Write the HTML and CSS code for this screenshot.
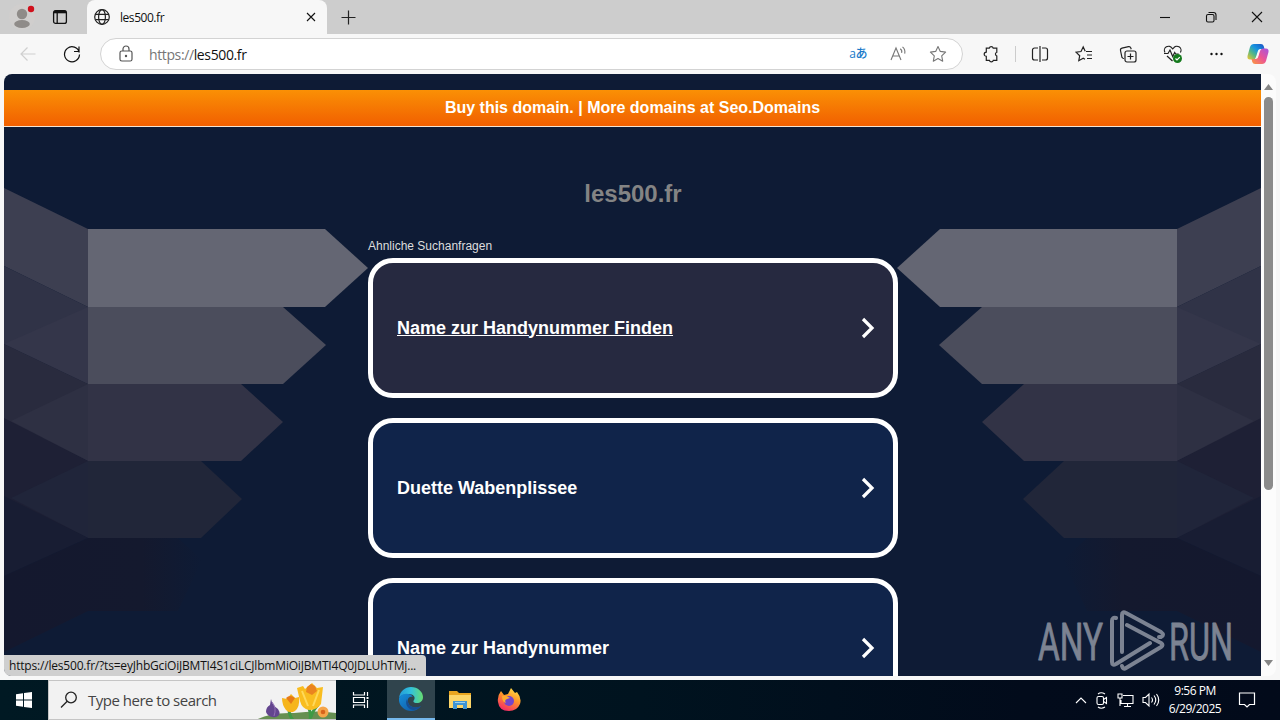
FILE: index.html
```html
<!DOCTYPE html>
<html lang="de">
<head>
    <meta charset="UTF-8">
    <title>les500.fr</title>
    <link rel="stylesheet" href="styles.css">
</head>
<body>
    <!-- Tab strip -->
    <div class="tabs">
        <svg class="profile" width="28" height="30" viewBox="8 2 28 30">
            <circle cx="22" cy="17" r="13" fill="#d0cecd"/>
            <circle cx="22" cy="14" r="5.2" fill="#8f8b88"/>
            <ellipse cx="22" cy="24" rx="7.8" ry="4" fill="#8f8b88"/>
            <circle cx="31" cy="9" r="3.2" fill="#d0101c"/>
        </svg>
        <svg class="workspaces" width="16" height="16" viewBox="0 0 16 16" fill="none" stroke="#111" stroke-width="1.3">
            <rect x="1.6" y="1.6" width="12.8" height="12.8" rx="2"/>
            <path d="M2 3h12" stroke-width="2.6"/>
            <path d="M5.2 4v10"/>
        </svg>
        <div class="tab">
            <svg width="16" height="16" viewBox="0 0 16 16" fill="none" stroke="#222" stroke-width="1.2">
                <circle cx="8" cy="8" r="7.3"/>
                <ellipse cx="8" cy="8" rx="3.4" ry="7.3"/>
                <path d="M1.4 5.3h13.2M1.4 10.7h13.2"/>
            </svg>
            <span class="tab-title">les500.fr</span>
            <svg class="close" width="10" height="10" viewBox="0 0 10 10" stroke="#111" stroke-width="1.1"><path d="M1 1l8 8M9 1l-8 8"/></svg>
        </div>
        <svg class="plus" width="15" height="15" viewBox="0 0 15 15" stroke="#222" stroke-width="1.2"><path d="M7.5 .5v14M.5 7.5h14"/></svg>
        <div class="window-buttons">
            <svg width="12" height="12" viewBox="0 0 12 12" fill="none" stroke="#111" stroke-width="1.1"><path d="M1 6.5h10"/></svg>
            <svg width="12" height="12" viewBox="0 0 12 12" fill="none" stroke="#111" stroke-width="1.1"><rect x="1.5" y="3.5" width="7.5" height="7.5" rx="1.5"/><path d="M3.5 1.5h5a2.5 2.5 0 0 1 2.5 2.5v5"/></svg>
            <svg width="12" height="12" viewBox="0 0 12 12" fill="none" stroke="#111" stroke-width="1.1"><path d="M1 1l10 10M11 1L1 11"/></svg>
        </div>
    </div>

    <!-- Toolbar -->
    <div class="toolbar">
        <svg class="back" width="16" height="16" viewBox="0 0 16 16" fill="none" stroke="#cfcfcf" stroke-width="1.2"><path d="M15.5 8H1M7.5 1.5L1 8l6.5 6.5"/></svg>
        <svg class="reload" width="18" height="18" viewBox="0 0 18 18" fill="none" stroke="#111" stroke-width="1.2"><path d="M16.3 7.5A7.5 7.5 0 1 0 16.5 9.5M16 1.500v5H11"/></svg>
        <div class="address">
            <svg class="lock" width="14" height="18" viewBox="0 0 14 18" fill="none" stroke="#555" stroke-width="1.2"><rect x="1" y="6" width="12" height="10" rx="1.8"/><path d="M4 6V4a3 3 0 0 1 6 0v2"/><circle cx="7" cy="11" r=".6" fill="#555"/></svg>
            <span class="url"><span class="scheme">https://</span>les500.fr</span>
            <span class="translate">aあ</span>
            <svg class="read" width="18" height="16" viewBox="0 0 18 16" fill="none" stroke="#777" stroke-width="1.1"><path d="M1 14L6 2l5 12M2.800 10h6.600M10.200 2.800a3.5 3.5 0 0 1 1.400 4M12.500 .800a7 7 0 0 1 2.200 6.800"/></svg>
            <svg class="star" width="18" height="18" viewBox="0 0 18 18" fill="none" stroke="#777" stroke-width="1.1" stroke-linejoin="round"><path d="M9 1.5l2.3 4.9 5.3.7-3.9 3.7 1 5.4L9 13.600l-4.700 2.600 1-5.400L1.400 7.100l5.300-.7z"/></svg>
        </div>
        <div class="tools">
            <svg width="18" height="18" viewBox="0 0 18 18"><path d="M4.300 3.200h3a2 2 0 0 1 3.900 0h3.600v4a2 2 0 0 0 0 3.800v4.300h-3.500a2 2 0 0 1-3.900 0H4.300v-4a2.100 2.100 0 1 1 0-4.200z"/></svg>
            <span class="separator"></span>
            <svg width="18" height="18" viewBox="0 0 18 18"><path d="M7 3H3.500a2 2 0 0 0-2 2v8a2 2 0 0 0 2 2H7M11 3h3.500a2 2 0 0 1 2 2v8a2 2 0 0 1-2 2H11M9 1v16"/></svg>
            <svg width="18" height="18" viewBox="0 0 18 18"><path d="M11 6.500h6M12 10h5M12 13.500h5M10.200 6.300L8.200 2 6 6.500l-5 .7 3.700 3.500-.9 5 4.400-2.400 1.800 1"/></svg>
            <svg width="18" height="18" viewBox="0 0 18 18"><path d="M5 13.500l-1-.3a2 2 0 0 1-1.300-2L1.500 5.500a2 2 0 0 1 1.500-2.300L9.500 1.700a2 2 0 0 1 2.300 1.200l.4 1.300"/><rect x="6" y="6" width="11" height="11" rx="2"/><path d="M11.500 8.500v6M8.500 11.500h6"/></svg>
            <svg width="20" height="18" viewBox="0 0 20 18"><path d="M2 7.500a4 4 0 0 1 7-4.300l.7.700.7-.7a4 4 0 0 1 7 4.300M4 11l5.500 5M1 8.500h4l2-3.500 2.700 6.500 2-4 1 1.500h3"/><circle cx="14.500" cy="13.500" r="4.500" fill="#157a1d" stroke="none"/><path d="M12.500 13.500l1.500 1.500 2.800-2.800" stroke="#fff"/></svg>
            <svg width="16" height="18" viewBox="0 0 16 18"><g fill="#111" stroke="none"><circle cx="2.500" cy="9" r="1.200"/><circle cx="7.500" cy="9" r="1.200"/><circle cx="12.500" cy="9" r="1.200"/></g></svg>
        </div>
        <svg class="copilot" width="22" height="22" viewBox="0 0 22 22">
            <defs>
                <linearGradient id="cool" x1="0" y1="1" x2="1" y2="0"><stop offset="0" stop-color="#f5c72b"/><stop offset=".35" stop-color="#52b788"/><stop offset=".6" stop-color="#1695e0"/><stop offset="1" stop-color="#1c4fc4"/></linearGradient>
                <linearGradient id="warm" x1="1" y1="0" x2="0" y2="1"><stop offset="0" stop-color="#a455e0"/><stop offset=".5" stop-color="#ec5594"/><stop offset="1" stop-color="#fb9b3c"/></linearGradient>
            </defs>
            <path d="M7 1h7q2 0 2.700 2l.8 3h-4q-2 0-2.600 2L9 14q-.7 2.500-3 2.500H3q-3 0-2.500-3.500L3 4q1-3 4-3z" fill="url(#cool)"/>
            <path d="M15 21H8q-2 0-2.700-2l-.8-3h4q2 0 2.600-2L13 8q.7-2.500 3-2.500h3q3 0 2.500 3.500L19 18q-1 3-4 3z" fill="url(#warm)"/>
            <path d="M9.500 14.500l2-7q.3-1 1.300-1-1.500 6-2 7.500-.3 1-1.300.5z" fill="#f7f7f7"/>
        </svg>
    </div>

    <div class="view">
        <div class="page">
            <svg class="arrows" width="1257" height="602" viewBox="4 74 1257 602">
                <defs>
                    <linearGradient id="fade"><stop offset="0" stop-color="#14182e"/><stop offset=".7" stop-color="#14192e"/><stop offset="1" stop-color="#0e1b35"/></linearGradient>
                    <g id="wing">
                        <path d="M4 188L88 229V307L4 266z" fill="#3d3f51"/>
                        <path d="M4 266L88 307V384L4 344z" fill="#303347"/>
                        <path d="M4 344L88 307V384z" fill="#34364a"/>
                        <path d="M4 344L88 384V461L4 421z" fill="#292b3e"/>
                        <path d="M11 421L88 384V461z" fill="#2e3043"/>
                        <path d="M4 418L88 461V538L4 498z" fill="#1e2035"/>
                        <path d="M11 498L88 461V538z" fill="#20253a"/>
                        <path d="M4 496L88 538 4 576z" fill="#181d33"/>
                        <path d="M4 576L88 538H178L202 560 178 611H88L4 652z" fill="url(#fade)"/>
                        <path d="M88 229H325L368 268 325 307H88z" fill="#646673"/>
                        <path d="M88 307H283L326 345 283 384H88z" fill="#4b4d5c"/>
                        <path d="M88 384H241L283 422 241 461H88z" fill="#323346"/>
                        <path d="M88 461H201L242 499 201 538H88z" fill="#212639"/>
                    </g>
                </defs>
                <use href="#wing"/>
                <use href="#wing" transform="translate(1265 0) scale(-1 1)"/>
            </svg>
            <div class="banner">Buy this domain. | More domains at Seo.Domains</div>
            <div class="content">
                <h1>les500.fr</h1>
                <p>Ahnliche Suchanfragen</p>
                <a class="card hovered"><span>Name zur Handynummer Finden</span><svg width="14" height="22" viewBox="0 0 14 22"><path d="M2 2l9 9-9 9"/></svg></a>
                <a class="card"><span>Duette Wabenplissee</span><svg width="14" height="22" viewBox="0 0 14 22"><path d="M2 2l9 9-9 9"/></svg></a>
                <a class="card"><span>Name zur Handynummer</span><svg width="14" height="22" viewBox="0 0 14 22"><path d="M2 2l9 9-9 9"/></svg></a>
            </div>
        </div>
        <div class="scrollbar">
            <svg width="9" height="6" viewBox="0 0 9 6"><path d="M0 6L4.500 0 9 6z"/></svg>
            <div class="thumb"></div>
            <svg class="down" width="9" height="6" viewBox="0 0 9 6"><path d="M0 0h9L4.500 6z"/></svg>
        </div>
        <div class="status">https://les500.fr/?ts=eyJhbGciOiJBMTI4S1ciLCJlbmMiOiJBMTI4Q0JDLUhTMj...</div>
        <svg class="watermark" width="204" height="66" viewBox="1033 608 204 66">
            <text x="1038" y="660" textLength="65" lengthAdjust="spacingAndGlyphs">ANY</text>
            <text x="1169" y="660" textLength="64" lengthAdjust="spacingAndGlyphs">RUN</text>
            <path d="M1116 618q-4-1-4 3v41q0 4 4 2l34-21M1122 652v-37q0-4 4-2l35 19q4 3 0 5h-2M1127 625l34 18q3 2 0 4l-35 21q-3 2-4-2"/>
        </svg>
    </div>

    <!-- Windows taskbar -->
    <div class="taskbar">
        <div class="start"><svg width="16" height="16" viewBox="0 0 16 16" fill="#fff"><path d="M0 2.200l7-1v6.300H0zM8 1l8-1v7.500H8zM0 8.500h7v6.300l-7-1zM8 8.500h8V16l-8-1z"/></svg></div>
        <div class="search">
            <svg width="18" height="18" viewBox="0 0 18 18" fill="none" stroke="#222" stroke-width="1.300"><circle cx="11" cy="6.500" r="5.300"/><path d="M7.200 10.300L1 16.500"/></svg>
            <span>Type here to search</span>
            <svg class="flowers" width="80" height="38" viewBox="256 681 80 38">
                <path d="M256 720q14-8 38-7 24-3 42 0v7z" fill="#668f51"/>
                <path d="M289 711q1 6 4 9M309 708q2 6 1 12M318 705q-5 5-7 12" stroke="#3f9a45" stroke-width="3" fill="none"/>
                <path d="M271 699q1 6 7 10 4 6-2 8-8 1-10-5 0-5 4-7z" fill="#63458f"/>
                <path d="M272 702q5 6 2 14" stroke="#9271b4" fill="none"/>
                <path d="M282 698l5 1 4-5 4 4 4-1q1 10-4 14-5 3-9-1-4-5-4-12z" fill="#f6b51c"/>
                <path d="M286 698q4-4 9 0l-4 6z" fill="#e67a18"/>
                <path d="M297 688l6-2 2 3 7-6 5 5 6-1-2 17q-4 6-12 6-7-1-9-9z" fill="#f9bd20"/>
                <path d="M307 687l4-3 4 2 2 5-5 4-6-3z" fill="#ea8420"/>
                <path d="M302 691l6 15M319 690l-6 16" stroke="#ffd95a" stroke-width="2"/>
                <circle cx="323" cy="712" r="5.500" fill="#f5a54a"/><circle cx="323" cy="712" r="2.300" fill="#d8641c"/>
            </svg>
        </div>
        <div class="app task-view"><svg width="18" height="18" viewBox="0 0 18 18" fill="none" stroke="#fff" stroke-width="1.200"><path d="M1.500 1v3h11V1M1.500 17v-3h11v3M1.500 6.500h11v5h-11zM15.500 1v4M15.500 9v8"/><path d="M14.500 7h2" stroke-width="2"/></svg></div>
        <div class="app active">
            <svg width="24" height="24" viewBox="0 0 24 24">
                <defs>
                    <linearGradient id="edge1"><stop offset="0" stop-color="#249bd8"/><stop offset=".5" stop-color="#32c1dc"/><stop offset="1" stop-color="#66dc70"/></linearGradient>
                    <linearGradient id="edge2" x1="0" y1="0" x2="1" y2="1"><stop offset="0" stop-color="#168fda"/><stop offset="1" stop-color="#10539e"/></linearGradient>
                </defs>
                <path d="M0 11C1 4 6 0 12 0c7 0 12 5 12 10 0 4-3 6-6 6-4 0-4-2-3-3 2-3-1-6-5-6-5 0-9 2-10 4z" fill="url(#edge1)"/>
                <path d="M0 11c2-5 11-6 14-1-4-1-6 2-5 5 1 5 7 7 13 4-2 3-6 5-10 5C5 24-1 18 0 11z" fill="url(#edge2)"/>
                <path d="M8 12c-3 6 2 11 7 11 3-1 6-2 7-4-6 3-12 1-13-4z" fill="#174d91"/>
            </svg>
        </div>
        <div class="app">
            <svg width="22" height="20" viewBox="0 0 22 20"><path d="M0 1h8l2 2h12v15H0z" fill="#e9a51f"/><path d="M0 5h22v13H0z" fill="#fcd568"/><path d="M4 19v-8h14v8h-4v-4H8v4z" fill="#3e94d3"/><path d="M6 12h10v1H6z" fill="#9bd0ee"/></svg>
        </div>
        <div class="app">
            <svg width="24" height="24" viewBox="0 0 24 24">
                <defs><linearGradient id="fox" x1=".8" y1="0" x2=".3" y2="1"><stop offset="0" stop-color="#ffe34a"/><stop offset=".45" stop-color="#ff9528"/><stop offset="1" stop-color="#f42968"/></linearGradient></defs>
                <path d="M4 3l3 4 4-1 3-6 4 5 2-1q5 6 3 12-3 7-11 7Q2 23 1 14q-1-6 3-11z" fill="url(#fox)"/>
                <circle cx="12" cy="13" r="5" fill="#7445cb"/>
                <path d="M5 8q4-1 8 2l-3 1q-3 1-1 4-4-1-4-7z" fill="#ffac2e"/>
            </svg>
        </div>
        <div class="tray">
            <svg width="12" height="18" viewBox="0 0 12 18"><path d="M1 12l5-5 5 5"/></svg>
            <svg width="14" height="18" viewBox="0 0 14 18"><rect x="2" y="5.500" width="6.500" height="8" rx="1.500"/><path d="M8.500 8.500l3-2v6l-3-2M3 3q3-2.500 7 0M3 16q3 2.500 7 0"/></svg>
            <svg width="17" height="18" viewBox="0 0 17 18"><path d="M6 4.500h10v8H4V9M10.500 12.500v3M7 15.500h7M1 3h4v4H1zM3 7v8"/></svg>
            <svg width="18" height="18" viewBox="0 0 18 18"><path d="M1 6.500h2.500L7 3v12l-3.500-3.500H1zM9.500 6.500q2 2.500 0 5M12 4.500q3.500 4.500 0 9M14.500 3q4.500 6 0 12"/></svg>
        </div>
        <div class="clock"><div class="time">9:56 PM</div><div class="date">6/29/2025</div></div>
        <svg class="notice" width="18" height="18" viewBox="0 0 18 18" fill="none" stroke="#fff" stroke-width="1.200"><path d="M1.500 2h15v11.500h-5L9 16l-2.500-2.500h-5z"/></svg>
    </div>
</body>
</html>
```
FILE: styles.css
```css
* {
    box-sizing: border-box;
}
body {
    margin: 0;
    width: 1280px;
    height: 720px;
    overflow: hidden;
    background: #f7f7f7;
    font-family: "Open Sans", "Noto Sans", sans-serif;
    color: #111;
}
svg {
    display: block;
    flex: none;
}

/* browser */
.tabs {
    display: flex;
    align-items: center;
    height: 34px;
    background: #cdcdcd;
}
.profile {
    margin-left: 8px;
}
.workspaces {
    margin-left: 16px;
}
.tab {
    display: flex;
    align-items: center;
    width: 240px;
    height: 34px;
    margin-left: 19px;
    padding: 0 11px 0 7px;
    background: #f7f7f7;
    border-radius: 8px 8px 0 0;
}
.tab-title {
    margin-left: 10px;
    font-size: 12px;
    letter-spacing: -0.45px;
}
.close {
    margin-left: auto;
}
.plus {
    margin-left: 14px;
}
.window-buttons {
    display: flex;
    gap: 34px;
    margin-left: auto;
    margin-right: 17px;
}
.toolbar {
    display: flex;
    align-items: center;
    height: 40px;
}
.back {
    margin-left: 20px;
}
.reload {
    margin-left: 27px;
}
.address {
    display: flex;
    align-items: center;
    width: 863px;
    height: 32px;
    margin-left: 19px;
    padding: 0 15px 0 18px;
    background: #fff;
    border: 1px solid #d3d3d3;
    border-radius: 16px;
}
.url {
    margin-left: 16px;
    font-size: 14px;
    letter-spacing: -0.38px;
}
.scheme {
    color: #767676;
}
.translate {
    margin-left: auto;
    font-family: "Open Sans", "Noto Sans CJK JP", sans-serif;
    font-size: 12px;
    font-weight: 500;
    line-height: 18px;
    letter-spacing: -0.5px;
    color: #1879c9;
}
.read {
    margin-left: 23px;
}
.star {
    margin-left: 21px;
}
.tools {
    display: flex;
    align-items: center;
    gap: 26px;
    margin-left: 19px;
    fill: none;
    stroke: #222;
    stroke-width: 1.2;
}
.separator {
    width: 1px;
    height: 16px;
    margin: 0 -11px 0 -11px;
    background: #ccc;
}
.copilot {
    margin-left: 22px;
}

/* web page */
.view {
    position: relative;
    display: flex;
    height: 602px;
    margin: 0 4px;
}
.page {
    position: relative;
    width: 1257px;
    height: 602px;
    padding-top: 16px;
    overflow: hidden;
    background: #0e1b35;
    border-radius: 8px 0 0 8px;
    font-family: "Liberation Sans", Arial, sans-serif;
}
.arrows {
    position: absolute;
    top: 0;
    left: 0;
}
.banner {
    position: relative;
    height: 37px;
    border-bottom: 1px solid #f5e3d0;
    background: linear-gradient(#fa9005, #f15f00);
    color: #fff;
    font-size: 16px;
    font-weight: bold;
    line-height: 35px;
    text-align: center;
}
.content {
    position: relative;
    width: 530px;
    margin: 0 0 0 364px;
    padding-top: 51px;
}
h1 {
    margin: 0;
    color: #848484;
    font-size: 24px;
    line-height: 32px;
    text-align: center;
}
p {
    margin: 28px 0 4px;
    color: #ddd;
    font-size: 12px;
    line-height: 16px;
}
.card {
    display: flex;
    align-items: center;
    justify-content: space-between;
    height: 140px;
    margin-bottom: 20px;
    padding: 0 18px 0 24px;
    border: 5px solid #fff;
    border-radius: 25px;
    background: #10244a;
    color: #fff;
    font-size: 18px;
    font-weight: bold;
}
.card svg {
    fill: none;
    stroke: #fff;
    stroke-width: 3.2;
}
.hovered {
    background: #262940;
    text-decoration: underline;
}
.scrollbar {
    display: flex;
    flex-direction: column;
    align-items: center;
    width: 15px;
    padding: 10px 0;
    background: #fcfcfc;
    border-radius: 0 8px 8px 0;
    fill: #858585;
}
.thumb {
    width: 9px;
    height: 393px;
    margin-top: 7px;
    border-radius: 5px;
    background: #8b8b8b;
}
.down {
    margin-top: auto;
}
.status {
    position: absolute;
    left: 0;
    bottom: 0;
    width: 422px;
    height: 21px;
    padding-left: 5px;
    background: #cfcfcf;
    border-radius: 0 4px 0 7px;
    font-size: 12px;
    line-height: 21px;
    letter-spacing: -0.19px;
    white-space: nowrap;
}
.watermark {
    position: absolute;
    left: 1029px;
    top: 534px;
    opacity: 0.6;
    fill: none;
    stroke: #c5c9d1;
    stroke-width: 4;
    stroke-linecap: round;
    stroke-linejoin: round;
}
.watermark text {
    fill: #c5c9d1;
    stroke: #c5c9d1;
    stroke-width: 0.8;
    font-family: Roboto, sans-serif;
    font-size: 52px;
}

/* taskbar */
.taskbar {
    display: flex;
    height: 40px;
    margin-top: 4px;
    background: linear-gradient(90deg, #001923, #00131f 50%, #020b1b 80%, #020a1a);
    color: #fff;
}
.start, .app {
    display: flex;
    align-items: center;
    justify-content: center;
    width: 48px;
}
.app {
    width: 49px;
}
.task-view {
    width: 51px;
    padding-right: 2px;
}
.search {
    display: flex;
    align-items: center;
    width: 288px;
    padding-left: 11px;
    background: #f2f2f2;
    border: 1px solid #c5c5c5;
    border-right: 0;
    color: #444;
    font-size: 15px;
}
.search span {
    margin-left: 10px;
    letter-spacing: -0.5px;
}
.flowers {
    margin-left: auto;
}
.active {
    width: 48px;
    background: #30444d;
    border-bottom: 2px solid #76b9ed;
}
.tray {
    display: flex;
    align-items: center;
    gap: 8px;
    margin-left: auto;
    fill: none;
    stroke: #fff;
    stroke-width: 1.1;
}
.clock {
    width: 70px;
    padding-top: 2px;
    font-size: 12px;
    line-height: 18px;
    letter-spacing: -0.5px;
    text-align: center;
}
.notice {
    margin: 11px 24px 0 8px;
}
```
